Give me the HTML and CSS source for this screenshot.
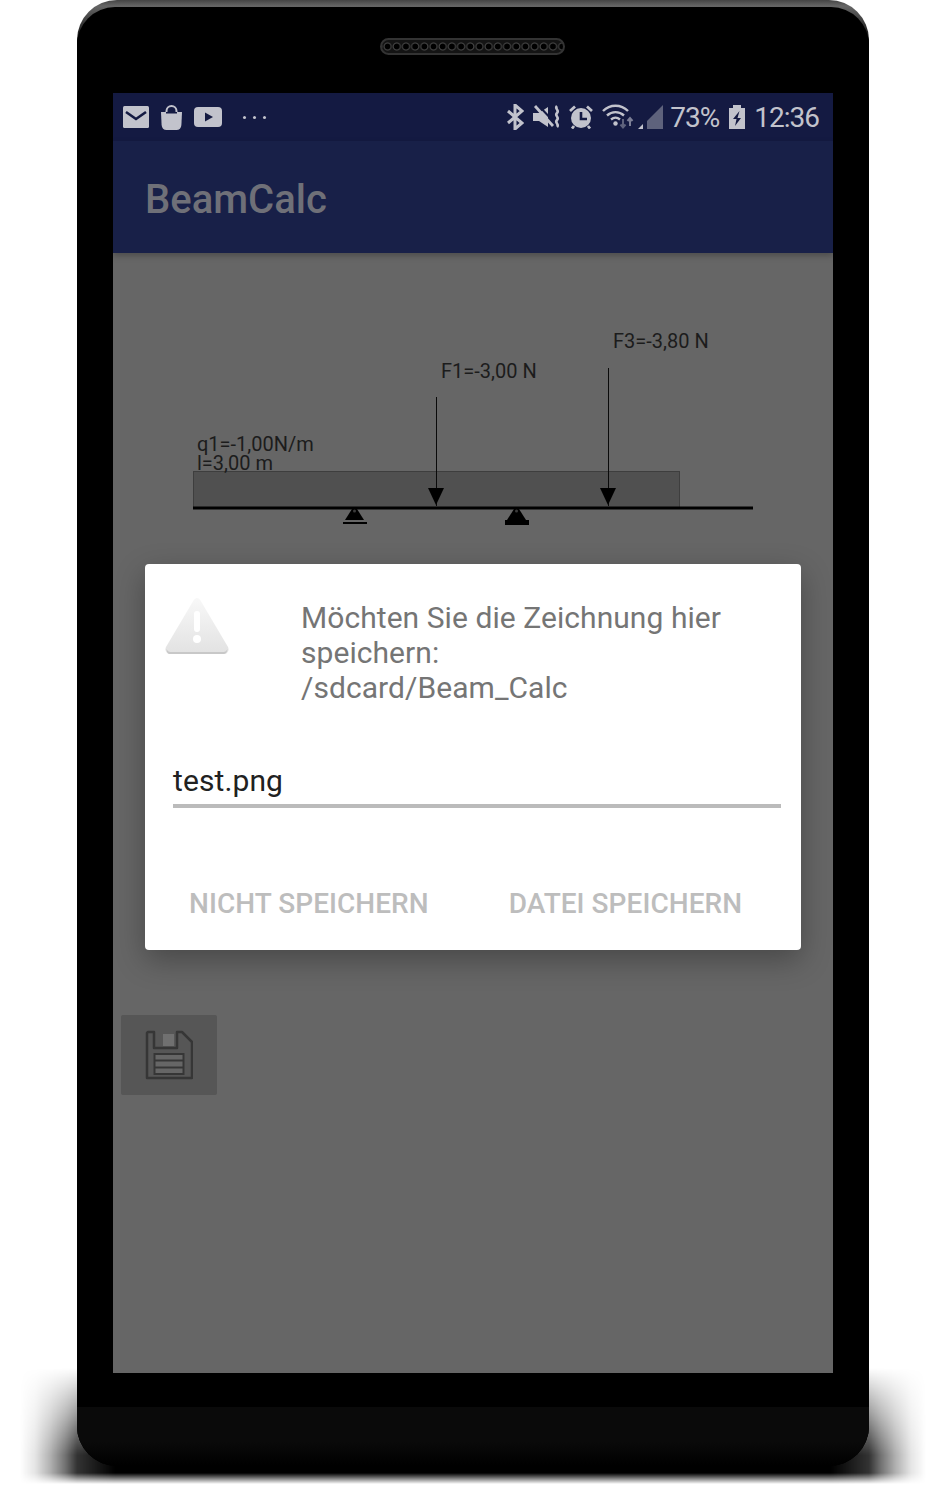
FILE: index.html
```html
<!doctype html>
<html>
<head>
    <title>BeamCalc</title>
    <link rel="stylesheet" href="styles.css">
</head>
<body>
<div class="phone">
    <div class="shell">
        <div class="bezel-top"><div class="speaker"></div></div>
        <div class="screen">
            <div class="status-bar">
                <div class="status-left">
                    <svg class="icon" width="26" height="22" viewBox="0 0 26 22"><rect width="26" height="22" rx="1.5" fill="#c2c3cc"/><path d="M3 6l10 7 10-7" fill="none" stroke="#141a42" stroke-width="2.6"/></svg>
                    <svg class="icon" width="23" height="25" viewBox="0 0 23 25"><path d="M1 7h21l-.6 13c-.2 3-2 5-5 5H6.600c-3 0-4.800-2-5-5z" fill="#c2c3cc"/><path d="M6.500 9V6a5 5 0 0 1 10 0v3" fill="none" stroke="#c2c3cc" stroke-width="2"/><rect x="6" y="7" width="11" height="1.500" fill="#141a42"/></svg>
                    <svg class="icon" width="28" height="20" viewBox="0 0 28 20"><rect width="28" height="20" rx="4" fill="#c2c3cc"/><path d="M11 5.500l8 4.500-8 4.500z" fill="#141a42"/></svg>
                    <div class="more-dots"><span></span><span></span><span></span></div>
                </div>
                <div class="status-right">
                    <svg class="icon" width="18" height="26" viewBox="0 0 18 26"><path d="M2 7l14 12-7 6V1l7 6L2 19" fill="none" stroke="#c2c3cc" stroke-width="3"/></svg>
                    <svg class="icon" width="28" height="24" viewBox="0 0 28 24"><path d="M0 8h6l9-6v20l-9-6H0z" fill="#c2c3cc"/><path d="M6 1l15 16" stroke="#141a42" stroke-width="2"/><path d="M2 1l18 20" stroke="#c2c3cc" stroke-width="2.800"/><path d="M24 1c-3 3 3 4 0 7s3 4 0 7 3 4 0 7" fill="none" stroke="#c2c3cc" stroke-width="2.600"/></svg>
                    <svg class="icon alarm" width="24" height="24" viewBox="0 0 24 24"><circle cx="12" cy="13" r="10" fill="#c2c3cc"/><path d="M12 7v7h6" fill="none" stroke="#141a42" stroke-width="2.600"/><path d="M1 6l5-4.500M23 6l-5-4.500M5 21l-2 2.500M19 21l2 2.500" stroke="#c2c3cc" stroke-width="2.800"/></svg>
                    <svg class="icon wifi" width="33" height="26" viewBox="0 0 33 26"><path d="M1 7c7-7 18-7 25 0M5 11.500c5-4.500 12-4.500 17 0M9 15.500c3-2.500 6-2.500 9 0" fill="none" stroke="#c2c3cc" stroke-width="2.400"/><circle cx="13.500" cy="19.500" r="2.200" fill="#c2c3cc"/><path d="M21 15v8M18.500 20.500l2.500 3 2.500-3" fill="none" stroke="#5e627c" stroke-width="2"/><path d="M28 22v-8M25.500 17l2.500-3 2.500 3" fill="none" stroke="#7c7f96" stroke-width="2"/></svg>
                    <svg class="icon signal" width="25" height="24" viewBox="0 0 25 24"><path d="M25 0v24H9V16z" fill="#5e627c"/><path d="M0 24l5-5v5z" fill="#c2c3cc"/></svg>
                    <span class="status-text percent">73%</span>
                    <svg class="icon" width="16" height="24" viewBox="0 0 16 24"><path d="M4 0h8v3h4v21H0V3h4z" fill="#c2c3cc"/><path d="M10.500 6l-6.500 8h3.500L6 21l6-8H8.500z" fill="#141a42"/></svg>
                    <span class="status-text">12:36</span>
                </div>
            </div>
            <div class="app-bar">BeamCalc</div>
            <div class="content">
                <svg class="diagram" width="720" height="300" viewBox="113 253 720 300">
                    <rect class="beam" x="193.500" y="471.500" width="486" height="36"/>
                    <line class="ground" x1="193" y1="508" x2="753" y2="508"/>
                    <line class="force" x1="436.500" y1="397" x2="436.500" y2="506"/>
                    <path class="solid" d="M428 488h16l-8 17z"/>
                    <line class="force" x1="608.500" y1="368" x2="608.500" y2="506"/>
                    <path class="solid" d="M600 488h16l-8 17z"/>
                    <path class="solid" d="M345 520l7-11h5l7 11z"/>
                    <circle class="pin" cx="354.500" cy="511" r="1.500"/>
                    <rect class="solid" x="343" y="522" width="24" height="2"/>
                    <path class="solid" d="M507 520l7-11h5l7 11z"/>
                    <circle class="pin" cx="516.500" cy="511" r="1.500"/>
                    <rect class="solid" x="505" y="520" width="24" height="5"/>
                    <text class="label" x="441" y="378">F1=-3,00 N</text>
                    <text class="label" x="613" y="348">F3=-3,80 N</text>
                    <text class="label" x="197" y="451">q1=-1,00N/m</text>
                    <text class="label" x="197" y="470">l=3,00 m</text>
                </svg>
                <div class="save-btn">
                    <svg width="48" height="50" viewBox="0 0 48 50"><path d="M3 2h6v16h23V2h5l10 10v36H2V3z" fill="none" stroke="#363636" stroke-width="2.500" stroke-linejoin="round"/><rect x="18" y="4" width="11" height="12" fill="#707070"/><rect x="9.500" y="24" width="29" height="20" fill="#666" stroke="#363636" stroke-width="2"/><path d="M10 30.500h28M10 37.500h28" stroke="#363636" stroke-width="2"/></svg>
                </div>
            </div>

            <div class="dialog">
                <div class="dialog-top">
                    <svg class="warn" width="64" height="58" viewBox="0 0 64 58">
                        <defs><linearGradient id="warnFill" x1="0" y1="0" x2="0" y2="1"><stop offset="0" stop-color="#f8f8f8"/><stop offset="1" stop-color="#e2e2e2"/></linearGradient></defs>
                        <path d="M32 1c1.500 0 2.500 1 3.500 2.500L63 50c1.500 3-.5 7-4 7H5c-3.500 0-5.500-4-4-7L28.500 3.500C29.500 2 30.500 1 32 1z" fill="url(#warnFill)"/>
                        <path d="M1.500 52c1 2 2 3 4 3h53c2 0 3-1 4-3-.2 3-2 5-4 5H5c-2 0-3.500-2-3.500-5z" fill="#c8c8c8"/>
                        <rect x="29" y="14" width="6" height="21" rx="3" fill="#fff"/>
                        <circle cx="32" cy="42" r="4" fill="#fff"/>
                    </svg>
                    <p class="message">Möchten Sie die Zeichnung hier speichern:<br>/sdcard/Beam_Calc</p>
                </div>
                <div class="field">test.png</div>
                <div class="dialog-buttons">
                    <span class="dialog-btn">NICHT SPEICHERN</span>
                    <span class="dialog-btn">DATEI SPEICHERN</span>
                </div>
            </div>
        </div>
        <div class="chin"></div>
    </div>
</div>
</body>
</html>
```

FILE: styles.css
```css
html {
    background-color: #ffffff;
    overflow: hidden;
}
body {
    margin: 0;
    padding: 0;
    width: 945px;
    height: 1490px;
    font-family: Roboto, sans-serif;
}
.phone {
    position: relative;
    width: 792px;
    height: 1466px;
    margin-left: 77px;
    border-radius: 40px;
    background: linear-gradient(#444444 0, #666666 6px, #000000 45px);
}
/* soft shadow under the phone */
.phone::before {
    content: "";
    position: absolute;
    z-index: -1;
    left: -62px;
    right: -62px;
    top: 1365px;
    height: 120px;
    background: linear-gradient(to right,
        transparent 5px, rgba(0, 0, 0, 0.1) 20px, rgba(0, 0, 0, 0.3) 35px, rgba(0, 0, 0, 0.55) 50px, rgba(0, 0, 0, 0.8) 62px, #000000 100px,
        #000000 calc(100% - 100px), rgba(0, 0, 0, 0.8) calc(100% - 62px), rgba(0, 0, 0, 0.55) calc(100% - 50px), rgba(0, 0, 0, 0.3) calc(100% - 35px), rgba(0, 0, 0, 0.1) calc(100% - 20px), transparent calc(100% - 5px));
    -webkit-mask-image: linear-gradient(to bottom, transparent 3px, rgba(0, 0, 0, 0.5) 50px, #000000 90px, #000000 108px, transparent 119px);
    mask-image: linear-gradient(to bottom, transparent 3px, rgba(0, 0, 0, 0.5) 50px, #000000 90px, #000000 108px, transparent 119px);
}
.shell {
    display: flex;
    flex-direction: column;
    height: 1459px;
    position: relative;
    top: 7px;
    border-radius: 38px 38px 40px 40px;
    background-color: #000000;
    overflow: hidden;
}
.bezel-top {
    height: 86px;
    display: flex;
    justify-content: center;
    align-items: center;
    padding: 0 2px 8px 0;
    box-sizing: border-box;
}
.speaker {
    width: 185px;
    height: 17px;
    box-sizing: border-box;
    border: 2px solid #333333;
    border-radius: 9px;
    background-color: #141414;
    background-image: radial-gradient(circle, #000000 2.500px, #4a4a4a 3.500px, transparent 4.500px);
    background-size: 9.200px 13px;
    background-position: 1px 0;
}
.screen {
    position: relative;
    width: 720px;
    height: 1280px;
    margin: 0 auto;
    flex: none;
    background-color: #666666;
    overflow: hidden;
}
.chin {
    margin-top: 34px;
    flex: 1;
    background: linear-gradient(#0a0a0a, #0a0a0a 35px, #000000 58px);
}
.status-bar {
    height: 48px;
    display: flex;
    justify-content: space-between;
    align-items: center;
    padding: 0 14px 0 10px;
    background-color: #141a42;
    color: #c2c3cc;
}
.status-left, .status-right {
    display: flex;
    align-items: center;
}
.status-left {
    gap: 11px;
}
.status-right {
    gap: 9px;
}
.icon {
    display: block;
    flex: none;
}
.alarm {
    margin: 0 0 0 -1px;
}
.wifi {
    margin-right: -6px;
}
.more-dots {
    display: flex;
    gap: 7px;
    margin-left: 10px;
}
.more-dots span {
    width: 3px;
    height: 3px;
    border-radius: 50%;
    background-color: #c2c3cc;
}
.status-text {
    font-size: 28px;
    letter-spacing: -1px;
    line-height: 48px;
    padding-top: 2px;
}
.percent {
    margin: 0 1px 0 -2px;
}
.app-bar {
    position: relative;
    height: 112px;
    padding-left: 32px;
    box-sizing: border-box;
    background-color: #182048;
    color: #6f7078;
    font-size: 40px;
    font-weight: 500;
    line-height: 118px;
    box-shadow: 0 3px 6px rgba(0, 0, 0, 0.25);
}
.content {
    display: flex;
    flex-direction: column;
}
.diagram {
    display: block;
}
.beam {
    fill: #505050;
    stroke: #3e3e3e;
    stroke-width: 1;
}
.ground {
    stroke: #000000;
    stroke-width: 3;
}
.force {
    stroke: #0a0a0a;
    stroke-width: 1;
}
.solid {
    fill: #000000;
}
.pin {
    fill: #3a3a3a;
}
.label {
    font-family: Roboto, sans-serif;
    font-size: 20px;
    fill: #1c1c1c;
}
.save-btn {
    width: 96px;
    height: 80px;
    margin: 462px 0 0 8px;
    display: flex;
    align-items: center;
    justify-content: center;
    background-color: #565656;
    border-radius: 2px;
}
/* modal on top of the page */
.dialog {
    position: absolute;
    left: 32px;
    top: 471px;
    width: 656px;
    height: 386px;
    box-sizing: border-box;
    padding: 33px 20px 0;
    border-radius: 4px;
    background-color: #ffffff;
    box-shadow: 0 10px 30px rgba(0, 0, 0, 0.3);
}
.dialog-top {
    display: flex;
    align-items: flex-start;
    gap: 72px;
}
.warn {
    flex: none;
}
.message {
    margin: 3px 0 0;
    font-size: 30px;
    line-height: 35px;
    letter-spacing: 0.06px;
    color: #757575;
}
.field {
    margin: 56px 0 0 8px;
    height: 47px;
    box-sizing: border-box;
    border-bottom: 4px solid #bbbbbb;
    font-size: 30px;
    line-height: 40px;
    letter-spacing: 0.1px;
    color: #212121;
}
.dialog-buttons {
    display: flex;
    gap: 80px;
    margin: 79px 0 0 24px;
}
.dialog-btn {
    font-size: 28px;
    font-weight: 500;
    line-height: 34px;
    letter-spacing: 0.05px;
    color: #bdbdbd;
}
```
